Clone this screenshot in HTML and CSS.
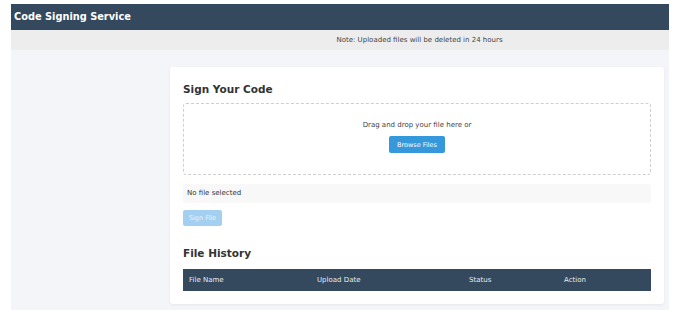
FILE: index.html
```html
<!DOCTYPE html>
<html>
<head>
<meta charset="utf-8">
<link rel="stylesheet" href="styles.css">
</head>
<body>
<div class="app">
  <header class="topbar">Code Signing Service</header>
  <div class="note">Note: Uploaded files will be deleted in 24 hours</div>
  <div class="main">
    <aside class="sidebar"></aside>
    <div class="content">
      <section class="card">
        <h2 class="title">Sign Your Code</h2>
        <div class="dropzone">
          <p class="drop-text">Drag and drop your file here or</p>
          <button class="btn btn-browse">Browse Files</button>
        </div>
        <div class="file-info">No file selected</div>
        <button class="btn btn-sign" disabled>Sign File</button>
        <h2 class="title history-title">File History</h2>
        <table class="history">
          <thead>
            <tr>
              <th class="c1">File Name</th>
              <th class="c2">Upload Date</th>
              <th class="c3">Status</th>
              <th class="c4">Action</th>
            </tr>
          </thead>
        </table>
      </section>
    </div>
  </div>
</div>
</body>
</html>
```

FILE: styles.css
```css
* { box-sizing: border-box; }
html, body { margin: 0; padding: 0; background: #ffffff; }
body {
  padding: 4px 11px 0 11px;
  font-family: "DejaVu Sans", Verdana, sans-serif;
  color: #333;
}
.app {
  width: 658px;
  height: 306px;
  background: #f4f5f9;
  display: flex;
  flex-direction: column;
}
.topbar {
  height: 26px;
  background: #34495e;
  color: #ffffff;
  font-weight: bold;
  font-size: 9.8px;
  line-height: 26px;
  padding-left: 3px;
}
.note {
  height: 20px;
  background: #ededee;
  font-size: 7px;
  line-height: 20px;
  color: #444;
  text-align: center;
  padding-left: 159px;
}
.main {
  flex: 1;
  display: flex;
}
.sidebar { width: 159px; flex: none; }
.content {
  flex: 1;
  padding: 17px 5px 0 0;
}
.card {
  background: #ffffff;
  border-radius: 3px;
  box-shadow: 0 1px 3px rgba(0,0,0,0.06);
  padding: 14px 13px 13px 13px;
}
.title {
  margin: 0;
  font-size: 10.5px;
  line-height: 16px;
  font-weight: bold;
  color: #333;
}
.dropzone {
  margin-top: 6px;
  height: 72px;
  border: 1px dashed #cfcfcf;
  border-radius: 3px;
  padding-top: 17px;
  text-align: center;
}
.drop-text {
  margin: 0;
  font-size: 7px;
  line-height: 8px;
  color: #444;
}
.btn {
  font-family: "DejaVu Sans", Verdana, sans-serif;
  border: none;
  border-radius: 2px;
  color: #fff;
  font-size: 6.5px;
  padding: 0;
}
.btn-browse {
  margin-top: 7px;
  width: 56px;
  height: 17px;
  background: #3498db;
}
.file-info {
  margin-top: 9px;
  height: 19px;
  background: #f8f8f9;
  border-radius: 2px;
  font-size: 7px;
  line-height: 19px;
  padding-left: 4px;
  color: #333;
}
.btn-sign {
  display: block;
  margin-top: 7px;
  width: 39px;
  height: 16px;
  background: #a3d0f0;
  color: #e8f4fc;
}
.history-title { margin-top: 19px; }
.history {
  margin-top: 8px;
  width: 100%;
  border-collapse: collapse;
  table-layout: fixed;
}
.history th {
  background: #34495e;
  color: #e6ebf0;
  font-weight: normal;
  font-size: 7px;
  height: 22px;
  text-align: left;
  padding: 0 6px;
}
.history .c1 { width: 128px; }
.history .c2 { width: 152px; }
.history .c3 { width: 95px; }
```
